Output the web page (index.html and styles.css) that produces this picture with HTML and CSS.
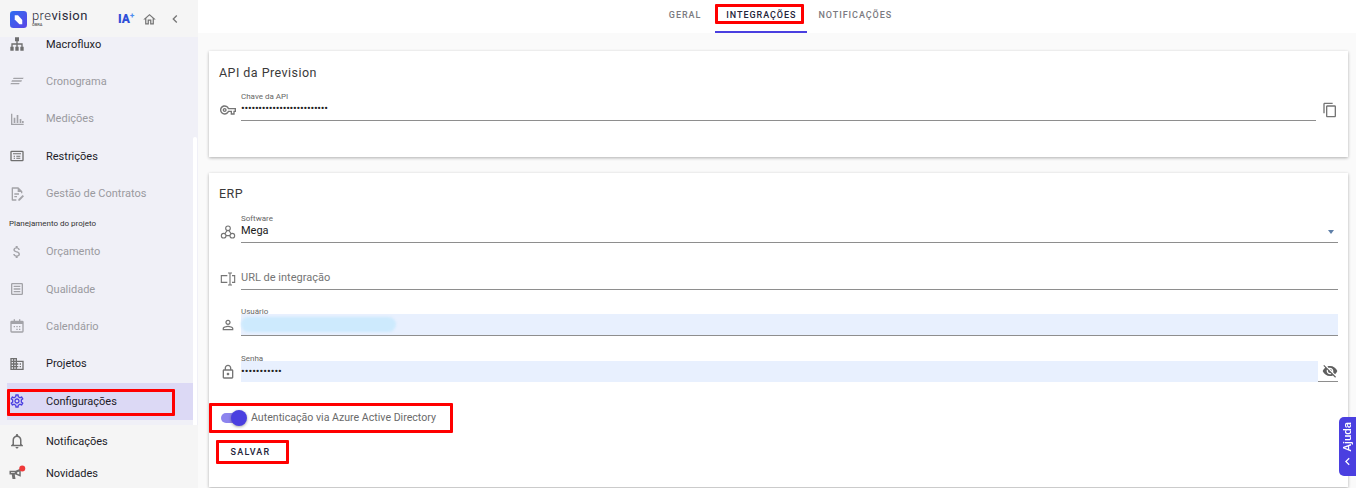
FILE: index.html
```html
<!DOCTYPE html>
<html lang="pt-BR">
<head>
<meta charset="utf-8">
<title>Prevision - Configurações</title>
<link rel="stylesheet" href="styles.css">
</head>
<body>
<aside class="sidebar">
  <header class="brand">
    <svg class="logo" viewBox="0 0 18 18"><defs><linearGradient id="lg" x1="0" y1="0" x2="1" y2="1"><stop offset="0" stop-color="#2f6df0"/><stop offset="1" stop-color="#5b45e6"/></linearGradient></defs><rect width="18" height="18" rx="3.5" fill="url(#lg)"/><path d="M5 4.5h3.5l4.5 5v4.5h-3L5 9z" fill="#fff"/></svg>
    <div class="brand-name"><div class="brand-word">pre<b>vision</b></div><div class="brand-sub">OBRA</div></div>
    <span class="ia">IA<sup>+</sup></span>
    <svg class="ico-home" viewBox="0 0 24 24"><path d="M12 5.69l5 4.5V18h-2v-6H9v6H7v-7.81l5-4.5M12 3L2 12h3v8h6v-6h2v6h6v-8h3L12 3z"/></svg>
    <svg class="ico-back" viewBox="0 0 24 24"><path d="M15.41 7.41L14 6l-6 6 6 6 1.41-1.41L10.83 12z"/></svg>
  </header>
  <nav class="nav">
    <div class="nav-inner">
      <a class="item"><svg class="ico" viewBox="0 0 24 24"><path d="M9 2h6v6h-2v3h7.5v5H22v6h-5v-6h1.5v-3H13v3h1.500v6h-5v-6H11v-3H5.500v3H7v6H2v-6h1.500v-5H11V8H9z"/></svg>Macrofluxo</a>
      <a class="item off"><svg class="ico" viewBox="0 0 24 24"><path d="M7 7h15l-1 2H6zM4.500 11h15l-1 2h-15zM3 15h13l-1 2H2z"/></svg>Cronograma</a>
      <a class="item off"><svg class="ico" viewBox="0 0 24 24"><path d="M3 4h2v15h17v2H3zM7 10h2.500v8H7zM11.500 6H14v12h-2.500zM16 12h2.500v6H16zM19.500 15H22v3h-2.500z"/></svg>Medições</a>
      <a class="item"><svg class="ico" viewBox="0 0 24 24"><path d="M4 4h16a2 2 0 0 1 2 2v12a2 2 0 0 1-2 2H4a2 2 0 0 1-2-2V6a2 2 0 0 1 2-2zm0 2v12h16V6zm2 2h12v1.500H6zm1 3.500h2V13H7zm4 0h6V13h-6zM7 14.500h2V16H7zm4 0h6V16h-6z"/></svg>Restrições</a>
      <a class="item off"><svg class="ico" viewBox="0 0 24 24"><path d="M5 2h9l6 6v3h-2V9h-5V4H6v16h5v2H5a1 1 0 0 1-1-1V3a1 1 0 0 1 1-1zm3 9h7v2H8zm0 4h4v2H8zm12.500-1.500l2 2L16 22h-2v-2z"/></svg>Gestão de Contratos</a>
      <div class="nav-label">Planejamento do projeto</div>
      <a class="item off"><svg class="ico" viewBox="0 0 24 24"><path d="M11.800 10.900c-2.270-.59-3-1.200-3-2.150 0-1.090 1.010-1.850 2.700-1.850 1.780 0 2.440.85 2.500 2.100h2.210c-.07-1.720-1.120-3.300-3.210-3.810V3h-3v2.160c-1.940.42-3.500 1.680-3.500 3.610 0 2.310 1.910 3.460 4.700 4.130 2.500.6 3 1.480 3 2.410 0 .69-.49 1.790-2.700 1.790-2.060 0-2.870-.92-2.980-2.100h-2.200c.12 2.190 1.760 3.420 3.680 3.830V21h3v-2.150c1.950-.37 3.500-1.500 3.500-3.550 0-2.840-2.430-3.810-4.700-4.400z"/></svg>Orçamento</a>
      <a class="item off"><svg class="ico" viewBox="0 0 24 24"><path d="M5 3h14a2 2 0 0 1 2 2v14a2 2 0 0 1-2 2H5a2 2 0 0 1-2-2V5a2 2 0 0 1 2-2zm0 2v14h14V5zm2 2h10v2H7zm0 4h10v2H7zm0 4h10v2H7z"/></svg>Qualidade</a>
      <a class="item off"><svg class="ico" viewBox="0 0 24 24"><path d="M7 2h2v2h6V2h2v2h3a2 2 0 0 1 2 2v14a2 2 0 0 1-2 2H4a2 2 0 0 1-2-2V6a2 2 0 0 1 2-2h3zM4 9v11h16V9zm3 3h2v2H7zm4 0h2v2h-2zm4 0h2v2h-2zm-4 4h2v2h-2zm4 0h2v2h-2z"/></svg>Calendário</a>
      <a class="item"><svg class="ico" viewBox="0 0 24 24"><path d="M12 7V3H2v18h20V7H12zM6 19H4v-2h2v2zm0-4H4v-2h2v2zm0-4H4V9h2v2zm0-4H4V5h2v2zm4 12H8v-2h2v2zm0-4H8v-2h2v2zm0-4H8V9h2v2zm0-4H8V5h2v2zm10 12h-8v-2h2v-2h-2v-2h2v-2h-2V9h8v10zm-2-8h-2v2h2v-2zm0 4h-2v2h2v-2z"/></svg>Projetos</a>
      <a class="item active"><svg class="ico" viewBox="0 0 24 24"><path d="M19.430 12.980c.04-.32.07-.64.07-.98 0-.34-.03-.66-.07-.98l2.110-1.650c.19-.15.24-.42.12-.64l-2-3.460c-.09-.16-.26-.25-.44-.25-.06 0-.12.01-.17.03l-2.490 1c-.52-.4-1.080-.73-1.690-.98l-.38-2.650C14.460 2.180 14.250 2 14 2h-4c-.25 0-.46.18-.49.42l-.38 2.650c-.61.25-1.170.59-1.690.98l-2.490-1c-.06-.02-.12-.03-.18-.03-.17 0-.34.09-.43.25l-2 3.460c-.13.22-.07.49.12.64l2.110 1.650c-.04.32-.07.65-.07.98 0 .33.03.66.07.98l-2.110 1.650c-.19.15-.24.42-.12.64l2 3.460c.09.16.26.25.44.25.06 0 .12-.01.17-.03l2.490-1c.52.4 1.080.73 1.690.98l.38 2.650c.03.24.24.42.49.42h4c.25 0 .46-.18.49-.42l.38-2.650c.61-.25 1.170-.59 1.690-.98l2.490 1c.06.02.12.03.18.03.17 0 .34-.09.43-.25l2-3.460c.12-.22.07-.49-.12-.64l-2.110-1.650zm-1.980-1.710c.04.31.05.52.05.73 0 .21-.02.43-.05.73l-.14 1.130.89.7 1.080.84-.7 1.210-1.270-.51-1.040-.42-.9.68c-.43.32-.84.56-1.250.73l-1.060.43-.16 1.130-.2 1.350h-1.400l-.19-1.350-.16-1.130-1.060-.43c-.43-.18-.83-.41-1.230-.71l-.91-.7-1.060.43-1.270.51-.7-1.210 1.080-.84.89-.7-.14-1.130c-.03-.31-.05-.54-.05-.74s.02-.43.05-.73l.14-1.130-.89-.7-1.080-.84.7-1.210 1.270.51 1.040.42.9-.68c.43-.32.84-.56 1.250-.73l1.060-.43.16-1.130.2-1.350h1.390l.19 1.350.16 1.130 1.060.43c.43.18.83.41 1.230.71l.91.7 1.060-.43 1.270-.51.7 1.210-1.070.85-.89.7.14 1.130zM12 8c-2.210 0-4 1.790-4 4s1.790 4 4 4 4-1.790 4-4-1.790-4-4-4zm0 6c-1.100 0-2-.9-2-2s.9-2 2-2 2 .9 2 2-.9 2-2 2z"/></svg>Configurações</a>
    </div>
    <span class="scroll-thumb"></span>
  </nav>
  <footer class="side-foot">
    <a class="item foot"><svg class="ico big" viewBox="0 0 24 24"><path d="M12 22c1.100 0 2-.9 2-2h-4c0 1.100.9 2 2 2zm6-6v-5c0-3.070-1.630-5.640-4.500-6.320V4c0-.83-.67-1.500-1.500-1.500s-1.500.67-1.500 1.500v.68C7.640 5.360 6 7.920 6 11v5l-2 2v1h16v-1l-2-2zm-2 1H8v-6c0-2.480 1.510-4.500 4-4.500s4 2.020 4 4.500v6z"/></svg>Notificações</a>
    <a class="item foot"><svg class="ico big" viewBox="0 0 24 24"><path d="M2 9h8l7-3v11l-7-3H9l1 6H6l-1-6H2zm2 2v1h5v-1zm8 .2v1.600l3 1.200V10z" fill-rule="evenodd"/><circle cx="19" cy="6" r="4" fill="#ef3a3a"/></svg>Novidades</a>
  </footer>
</aside>

<main class="main">
  <div class="tabs">
    <a class="tab first-tab">GERAL</a>
    <a class="tab current">INTEGRAÇÕES</a>
    <a class="tab">NOTIFICAÇÕES</a>
  </div>
  <div class="content">
    <section class="card card-api">
      <h2 class="card-title">API da Prevision</h2>
      <div class="field-row first">
        <svg class="f-ico" viewBox="0 0 24 24"><path d="M22 19h-6v-4h-2.680c-1.140 2.420-3.600 4-6.320 4-3.860 0-7-3.140-7-7s3.140-7 7-7c2.720 0 5.170 1.580 6.320 4H24v6h-2v4zm-4-2h2v-4h2v-2H11.940l-.23-.67C11.010 8.340 9.110 7 7 7c-2.760 0-5 2.240-5 5s2.240 5 5 5c2.110 0 4.010-1.340 4.710-3.330l.23-.67H18v4zM7 15c-1.650 0-3-1.350-3-3s1.350-3 3-3 3 1.350 3 3-1.350 3-3 3zm0-4c-.55 0-1 .45-1 1s.45 1 1 1 1-.45 1-1-.45-1-1-1z"/></svg>
        <div class="box">
          <label class="f-label">Chave da API</label>
          <div class="f-value dots key">•••••••••••••••••••••••••</div>
        </div>
        <svg class="copy" viewBox="0 0 24 24"><path d="M16 1H4c-1.100 0-2 .9-2 2v14h2V3h12V1zm3 4H8c-1.100 0-2 .9-2 2v14c0 1.100.9 2 2 2h11c1.100 0 2-.9 2-2V7c0-1.100-.9-2-2-2zm0 16H8V7h11v14z"/></svg>
      </div>
    </section>

    <section class="card card-erp">
      <h2 class="card-title">ERP</h2>
      <div class="field-row soft">
        <svg class="f-ico line" viewBox="0 0 24 24"><circle cx="12" cy="6.500" r="3.500"/><circle cx="5.500" cy="17.500" r="3.500"/><circle cx="18.500" cy="17.500" r="3.500"/><path d="M10.500 10l-3.500 5M9 17.500h6M13.500 10l3.500 5"/></svg>
        <div class="box">
          <label class="f-label">Software</label>
          <div class="f-value">Mega</div>
          <span class="caret"></span>
        </div>
      </div>
      <div class="field-row">
        <svg class="f-ico line" viewBox="0 0 24 24"><path d="M11 7H2v10h9M18 7h4v10h-4M15 3v18M12 3h6M12 21h6"/></svg>
        <div class="box">
          <div class="f-value placeholder">URL de integração</div>
        </div>
      </div>
      <div class="field-row">
        <svg class="f-ico" viewBox="0 0 24 24"><path d="M12 5.900c1.160 0 2.100.94 2.100 2.100s-.94 2.100-2.100 2.100S9.900 9.160 9.900 8s.94-2.100 2.100-2.100m0 9c2.970 0 6.100 1.460 6.100 2.100v1.100H5.900V17c0-.64 3.130-2.100 6.100-2.100M12 4C9.790 4 8 5.790 8 8s1.790 4 4 4 4-1.790 4-4-1.790-4-4-4zm0 9c-2.670 0-8 1.340-8 4v3h16v-3c0-2.660-5.330-4-8-4z"/></svg>
        <div class="box">
          <label class="f-label">Usuário</label>
          <div class="f-value filled"><span class="smudge"></span></div>
        </div>
      </div>
      <div class="field-row">
        <svg class="f-ico" viewBox="0 0 24 24"><path d="M18 8h-1V6c0-2.760-2.240-5-5-5S7 3.240 7 6v2H6c-1.100 0-2 .9-2 2v10c0 1.100.9 2 2 2h12c1.100 0 2-.9 2-2V10c0-1.100-.9-2-2-2zM9 6c0-1.660 1.340-3 3-3s3 1.340 3 3v2H9V6zm9 14H6V10h12v10zm-6-3c1.100 0 2-.9 2-2s-.9-2-2-2-2 .9-2 2 .9 2 2 2z"/></svg>
        <div class="box plain">
          <label class="f-label">Senha</label>
          <div class="pw-line">
            <div class="f-value filled dots">•••••••••••</div>
            <span class="adorn"><svg class="eye" viewBox="0 0 24 24"><path d="M12 7c2.760 0 5 2.240 5 5 0 .65-.13 1.260-.36 1.830l2.920 2.920c1.510-1.260 2.700-2.890 3.430-4.750-1.730-4.390-6-7.500-11-7.500-1.400 0-2.740.25-3.980.7l2.160 2.160C10.740 7.130 11.350 7 12 7zM2 4.270l2.280 2.280.46.46C3.080 8.300 1.780 10.020 1 12c1.730 4.390 6 7.500 11 7.500 1.550 0 3.030-.3 4.380-.84l.42.42L19.730 22 21 20.730 3.270 3 2 4.270zM7.530 9.800l1.550 1.550c-.05.21-.08.43-.08.65 0 1.660 1.340 3 3 3 .22 0 .44-.03.65-.08l1.550 1.550c-.67.33-1.410.53-2.200.53-2.760 0-5-2.240-5-5 0-.79.2-1.530.53-2.200zm4.310-.78l3.150 3.150.02-.16c0-1.660-1.340-3-3-3l-.17.01z"/></svg></span>
          </div>
        </div>
      </div>
      <div class="toggle-row">
        <span class="switch"><span class="thumb"></span></span>
        <span class="toggle-text">Autenticação via Azure Active Directory</span>
      </div>
      <button class="save">SALVAR</button>
    </section>
  </div>
</main>

<a class="help"><span class="help-text">Ajuda</span><svg class="help-chev" viewBox="0 0 24 24"><path d="M7.410 15.410L12 10.830l4.590 4.580L18 14l-6-6-6 6z"/></svg></a>
</body>
</html>
```

FILE: styles.css
```css
*, *::before, *::after { box-sizing: border-box; }
html, body { margin: 0; padding: 0; height: 488px; overflow: hidden; }
body {
  display: flex;
  position: relative;
  background: #fafafa;
  font-family: Roboto, "Liberation Sans", sans-serif;
  color: #212121;
}

/* sidebar */
.sidebar { width: 198px; flex: none; height: 488px; display: flex; flex-direction: column; background: #f5f5f5; }
.brand { height: 37px; flex: none; display: flex; align-items: center; padding-left: 10px; position: relative; }
.logo { width: 17px; height: 17px; flex: none; margin-top: 1px; }
.brand-name { margin-left: 5px; width: 81px; margin-top: -2px; }
.brand-word { font-size: 13px; line-height: 13px; font-weight: 300; letter-spacing: .4px; color: #2b2b3a; }
.brand-word b { font-weight: 400; }
.brand-sub { font-size: 4px; line-height: 5px; color: #555; font-weight: 500; }
.ia { margin-left: 5px; width: 24px; font-size: 12px; font-weight: 900; color: #2f4fd8; line-height: 14px; margin-top: 1px; }
.ia sup { font-size: 8px; line-height: 0; color: #4f8ff0; }
.ico-home { width: 15px; height: 15px; fill: #757575; flex: none; margin-top: 1px; }
.ico-back { width: 16px; height: 16px; fill: #757575; flex: none; margin-left: 10px; margin-top: 1px; }

.nav { flex: 1; background: #f0f0f7; overflow: hidden; position: relative; }
.nav-inner { margin-top: -11.600px; }
.scroll-thumb { position: absolute; left: 193px; top: 100px; width: 4px; bottom: 0; background: #fff; border-radius: 2px 2px 0 0; }
.item { display: flex; align-items: center; height: 37.4px; padding-left: 9px; font-size: 11px; color: #1c1c28; }
.item .ico { width: 16px; height: 16px; fill: #6f6f6f; margin-right: 21px; flex: none; }
.item .ico.big { width: 18px; height: 18px; margin: 0 20px 0 -1px; }
.item.off { color: #9a9a9f; }
.item.off .ico { fill: #a3a3a8; }
.nav-label { height: 20.6px; padding: 7px 0 0 9px; font-size: 8px; line-height: 10px; color: #333; }
.item.active { position: relative; margin-left: 7px; width: 186px; padding-left: 2px; background: #dcd9f5; }
.item.active .ico { fill: #4a3fe0; }
.item.active::after { content: ""; position: absolute; left: 0; top: 6px; width: 168px; height: 27px; border: 3px solid #f00; border-radius: 1px; }
.side-foot { height: 63px; flex: none; }
.item.foot { height: 32px; }

/* main */
.main { flex: 1; min-width: 0; height: 488px; display: flex; flex-direction: column; }
.tabs { height: 33px; flex: none; background: #fff; display: flex; justify-content: center; padding-left: 7px; }
.tab { position: relative; height: 33px; padding: 0 11px; font-size: 9px; font-weight: 500; letter-spacing: .95px; line-height: 31px; color: #7a7a80; white-space: nowrap; }
.first-tab { margin-right: 3px; }
.tab.current { color: #24243a; border-bottom: 2px solid #4a3fe0; }
.tab.current::after { content: ""; position: absolute; left: 0; top: 4px; width: 89px; height: 20px; border: 3px solid #f00; border-radius: 1px; }
.content { flex: 1; padding: 18px 8px 0 11px; display: flex; flex-direction: column; gap: 16px; }
.card { background: #fff; box-shadow: 0 1px 3px rgba(0,0,0,.3); padding: 14px 10px 0; }
.card-api { height: 106px; flex: none; }
.card-erp { height: 314px; flex: none; }
.card-title { margin: 0; font-size: 12.5px; font-weight: 400; line-height: 16px; letter-spacing: .45px; color: #3a3a3a; }
.card-erp .card-title { margin-top: -1px; }

.field-row { display: flex; align-items: center; margin-top: 16.500px; }
.field-row.first { margin-top: 10px; }
.field-row.soft { margin-top: 11px; }
.f-ico { width: 16px; height: 16px; fill: #757575; flex: none; margin: 8px 5px 0 1px; }
.f-ico.line { fill: none; stroke: #757575; stroke-width: 1.700; }
.box { position: relative; flex: 1; height: 30px; border-bottom: 1px solid #8e8e8e; min-width: 0; }
.box.plain { border-bottom: 0; }
.f-label { display: block; height: 8px; font-size: 8px; line-height: 12px; color: #666; }
.f-value { height: 21px; font-size: 11px; line-height: 20px; color: #1a1a1a; }
.dots { font-size: 11px; color: #222; }
.dots.key { letter-spacing: -.24px; line-height: 19px; }
.placeholder { padding-top: 7px; line-height: 21px; height: 29px; color: #757575; }
.filled { background: #e8f0fe; position: relative; line-height: 21px; }
.filled.dots { flex: 1; height: 21px; line-height: 21px; }
.smudge { position: absolute; left: 0; top: 3px; width: 155px; height: 15px; border-radius: 8px; background: #cdeafd; filter: blur(1px); }
.pw-line { display: flex; }
.adorn { width: 20px; flex: none; height: 21px; border-bottom: 1px solid #8e8e8e; display: flex; align-items: center; justify-content: center; }
.eye { width: 16px; height: 16px; fill: #5f5f5f; margin-left: 4px; }
.copy { width: 16px; height: 16px; fill: #757575; flex: none; margin: 8px 0 0 6px; }
.caret { position: absolute; right: 4px; top: 17px; border: 3.500px solid transparent; border-top: 4px solid #5f7fa8; border-bottom: 0; }

.toggle-row { display: flex; align-items: center; margin: 20px 0 0 -10px; width: 244px; height: 30px; border: 3px solid #f00; border-radius: 1px; padding-left: 9px; }
.switch { position: relative; width: 25px; height: 10px; border-radius: 5px; background: #8d84ee; flex: none; }
.thumb { position: absolute; right: -1px; top: -3px; width: 16px; height: 16px; border-radius: 50%; background: #4a3fe0; box-shadow: 0 1px 3px rgba(0,0,0,.35); }
.toggle-text { margin-left: 5px; font-size: 10.600px; color: #6a6a6a; white-space: nowrap; }
.save { display: block; margin: 7px 0 0 -3px; width: 73px; height: 24px; padding: 0 4px 0 0; border: 3px solid #f00; border-radius: 1px; background: #fff; font-family: inherit; font-size: 9px; font-weight: 500; letter-spacing: 1.200px; color: #24243a; }

/* help */
.help { position: absolute; right: 0; top: 417px; width: 17px; height: 59px; border-radius: 5px 0 0 5px; background: #4a3fe0; display: flex; flex-direction: column; align-items: center; justify-content: flex-end; padding-bottom: 7px; color: #fff; }
.help-text { writing-mode: vertical-rl; transform: rotate(180deg); font-size: 11.500px; font-weight: 500; line-height: 17px; margin-bottom: 2px; }
.help-chev { width: 15px; height: 15px; fill: #fff; transform: rotate(-90deg); }
```
